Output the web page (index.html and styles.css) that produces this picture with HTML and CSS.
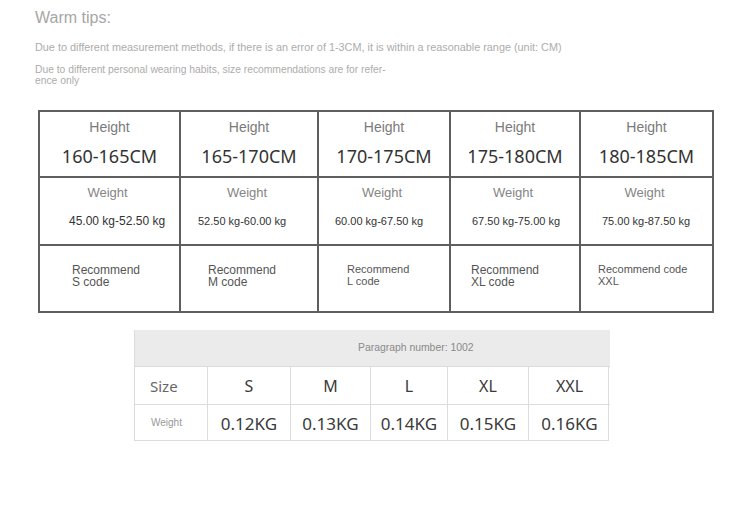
FILE: index.html
```html
<!DOCTYPE html>
<html>
<head>
<meta charset="utf-8">
<link rel="stylesheet" href="styles.css">
</head>
<body>
<div class="page">
  <h1 class="title">Warm tips:</h1>
  <p class="note">Due to different measurement methods, if there is an error of 1-3CM, it is within a reasonable range (unit: CM)</p>
  <p class="note small">Due to different personal wearing habits, size recommendations are for refer-<br>ence only</p>

  <div class="chart">
    <div class="cell c1"><div class="lbl">Height</div><div class="num">160-165CM</div></div>
    <div class="cell c2"><div class="lbl">Height</div><div class="num">165-170CM</div></div>
    <div class="cell c3"><div class="lbl">Height</div><div class="num">170-175CM</div></div>
    <div class="cell c4"><div class="lbl">Height</div><div class="num">175-180CM</div></div>
    <div class="cell c5"><div class="lbl">Height</div><div class="num">180-185CM</div></div>

    <div class="cell wcell c1"><div class="wlbl">Weight</div><div class="wval big">45.00 kg-52.50 kg</div></div>
    <div class="cell wcell c2"><div class="wlbl">Weight</div><div class="wval">52.50 kg-60.00 kg</div></div>
    <div class="cell wcell c3"><div class="wlbl">Weight</div><div class="wval">60.00 kg-67.50 kg</div></div>
    <div class="cell wcell c4"><div class="wlbl">Weight</div><div class="wval">67.50 kg-75.00 kg</div></div>
    <div class="cell wcell c5"><div class="wlbl">Weight</div><div class="wval">75.00 kg-87.50 kg</div></div>

    <div class="cell rcell r1"><div class="rec">Recommend<br>S code</div></div>
    <div class="cell rcell r2"><div class="rec">Recommend<br>M code</div></div>
    <div class="cell rcell r3"><div class="rec sm">Recommend<br>L code</div></div>
    <div class="cell rcell r4"><div class="rec">Recommend<br>XL code</div></div>
    <div class="cell rcell r5"><div class="rec sm">Recommend code<br>XXL</div></div>
  </div>

  <div class="spec">
    <div class="spec-head">Paragraph number: 1002</div>
    <div class="sc first size-lbl">Size</div>
    <div class="sc sz">S</div>
    <div class="sc sz">M</div>
    <div class="sc sz">L</div>
    <div class="sc sz">XL</div>
    <div class="sc sz">XXL</div>
    <div class="sc first wt-lbl">Weight</div>
    <div class="sc kg">0.12KG</div>
    <div class="sc kg">0.13KG</div>
    <div class="sc kg">0.14KG</div>
    <div class="sc kg">0.15KG</div>
    <div class="sc kg">0.16KG</div>
  </div>
</div>
</body>
</html>
```

FILE: styles.css
```css
* { box-sizing: border-box; }
html, body { margin: 0; padding: 0; background: #fff; }
body { font-family: "Liberation Sans", Arial, sans-serif; width: 750px; height: 507px; overflow: hidden; }

.page { padding: 8px 0 0 35px; }

.title {
  margin: 0;
  font-weight: normal;
  font-size: 16px;
  line-height: 20px;
  color: #a6a6a6;
}

.note {
  margin: 13px 0 0;
  font-size: 10.85px;
  line-height: 12px;
  color: #acacac;
  white-space: nowrap;
}
.note.small {
  margin-top: 11px;
  font-size: 10.3px;
  line-height: 11px;
}

.chart {
  margin: 24px 0 0 3px;
  display: grid;
  grid-template-columns: 141px 138px 132px 130px 133px;
  grid-template-rows: 66px 68px 67px;
  border-left: 2px solid #5e5e5e;
  border-top: 2px solid #5e5e5e;
  width: 676px;
}
.cell {
  border-right: 2px solid #5e5e5e;
  border-bottom: 2px solid #5e5e5e;
  display: flex;
  flex-direction: column;
  align-items: center;
  padding-top: 6px;
}
.lbl {
  font-size: 14px;
  line-height: 18px;
  color: #7a7a7a;
}
.num {
  margin-top: 8px;
  font-family: "Noto Sans", "Open Sans", sans-serif;
  font-size: 18px;
  line-height: 24px;
  color: #333;
}
.wlbl {
  font-size: 13px;
  line-height: 18px;
  color: #858585;
}
.wcell { align-items: stretch; }
.wcell .wlbl { text-align: center; padding-right: 4px; }
.wval {
  margin-top: 11px;
  font-size: 11px;
  line-height: 16px;
  color: #333;
  white-space: nowrap;
}
.wval.big { font-size: 12px; }
.wcell.c1 .wval { padding-left: 29px; }
.wcell.c2 .wval { padding-left: 17px; }
.wcell.c3 .wval { padding-left: 16px; }
.wcell.c4 .wval { padding-left: 21px; }
.wcell.c5 .wval { padding-left: 21px; }

.rcell { align-items: flex-start; padding-top: 18px; }
.rec {
  font-size: 12px;
  line-height: 12px;
  color: #555;
  white-space: nowrap;
}
.rec.sm { font-size: 11px; line-height: 11.5px; }
.r1 { padding-left: 32px; }
.r2 { padding-left: 27px; }
.r3 { padding-left: 28px; }
.r4 { padding-left: 20px; }
.r5 { padding-left: 17px; }

.spec {
  margin: 17px 0 0 99px;
  width: 475px;
  display: grid;
  grid-template-columns: 72px 83px 80px 77px 81px 82px;
  grid-template-rows: 36px 38px 36px;
  border: 1px solid #dcdcdc;
  border-top: 0;
}
.spec-head {
  grid-column: 1 / -1;
  background: #ebebeb;
  font-size: 10.4px;
  line-height: 36px;
  color: #8a8a8a;
  padding-left: 223px;
}
.sc {
  border-top: 1px solid #dcdcdc;
  border-left: 1px solid #dcdcdc;
  display: flex;
  align-items: center;
  justify-content: center;
  font-family: "Noto Sans", "Open Sans", sans-serif;
  color: #3a3a3a;
}
.sc.first { border-left: 0; justify-content: flex-start; }
.size-lbl { font-size: 15px; color: #666; padding-left: 15px; }
.wt-lbl { font-family: "Liberation Sans", Arial, sans-serif; font-size: 10px; color: #999; padding-left: 16px; }
.sz { font-size: 16px; }
.kg { font-size: 17px; padding-top: 2px; }
```
